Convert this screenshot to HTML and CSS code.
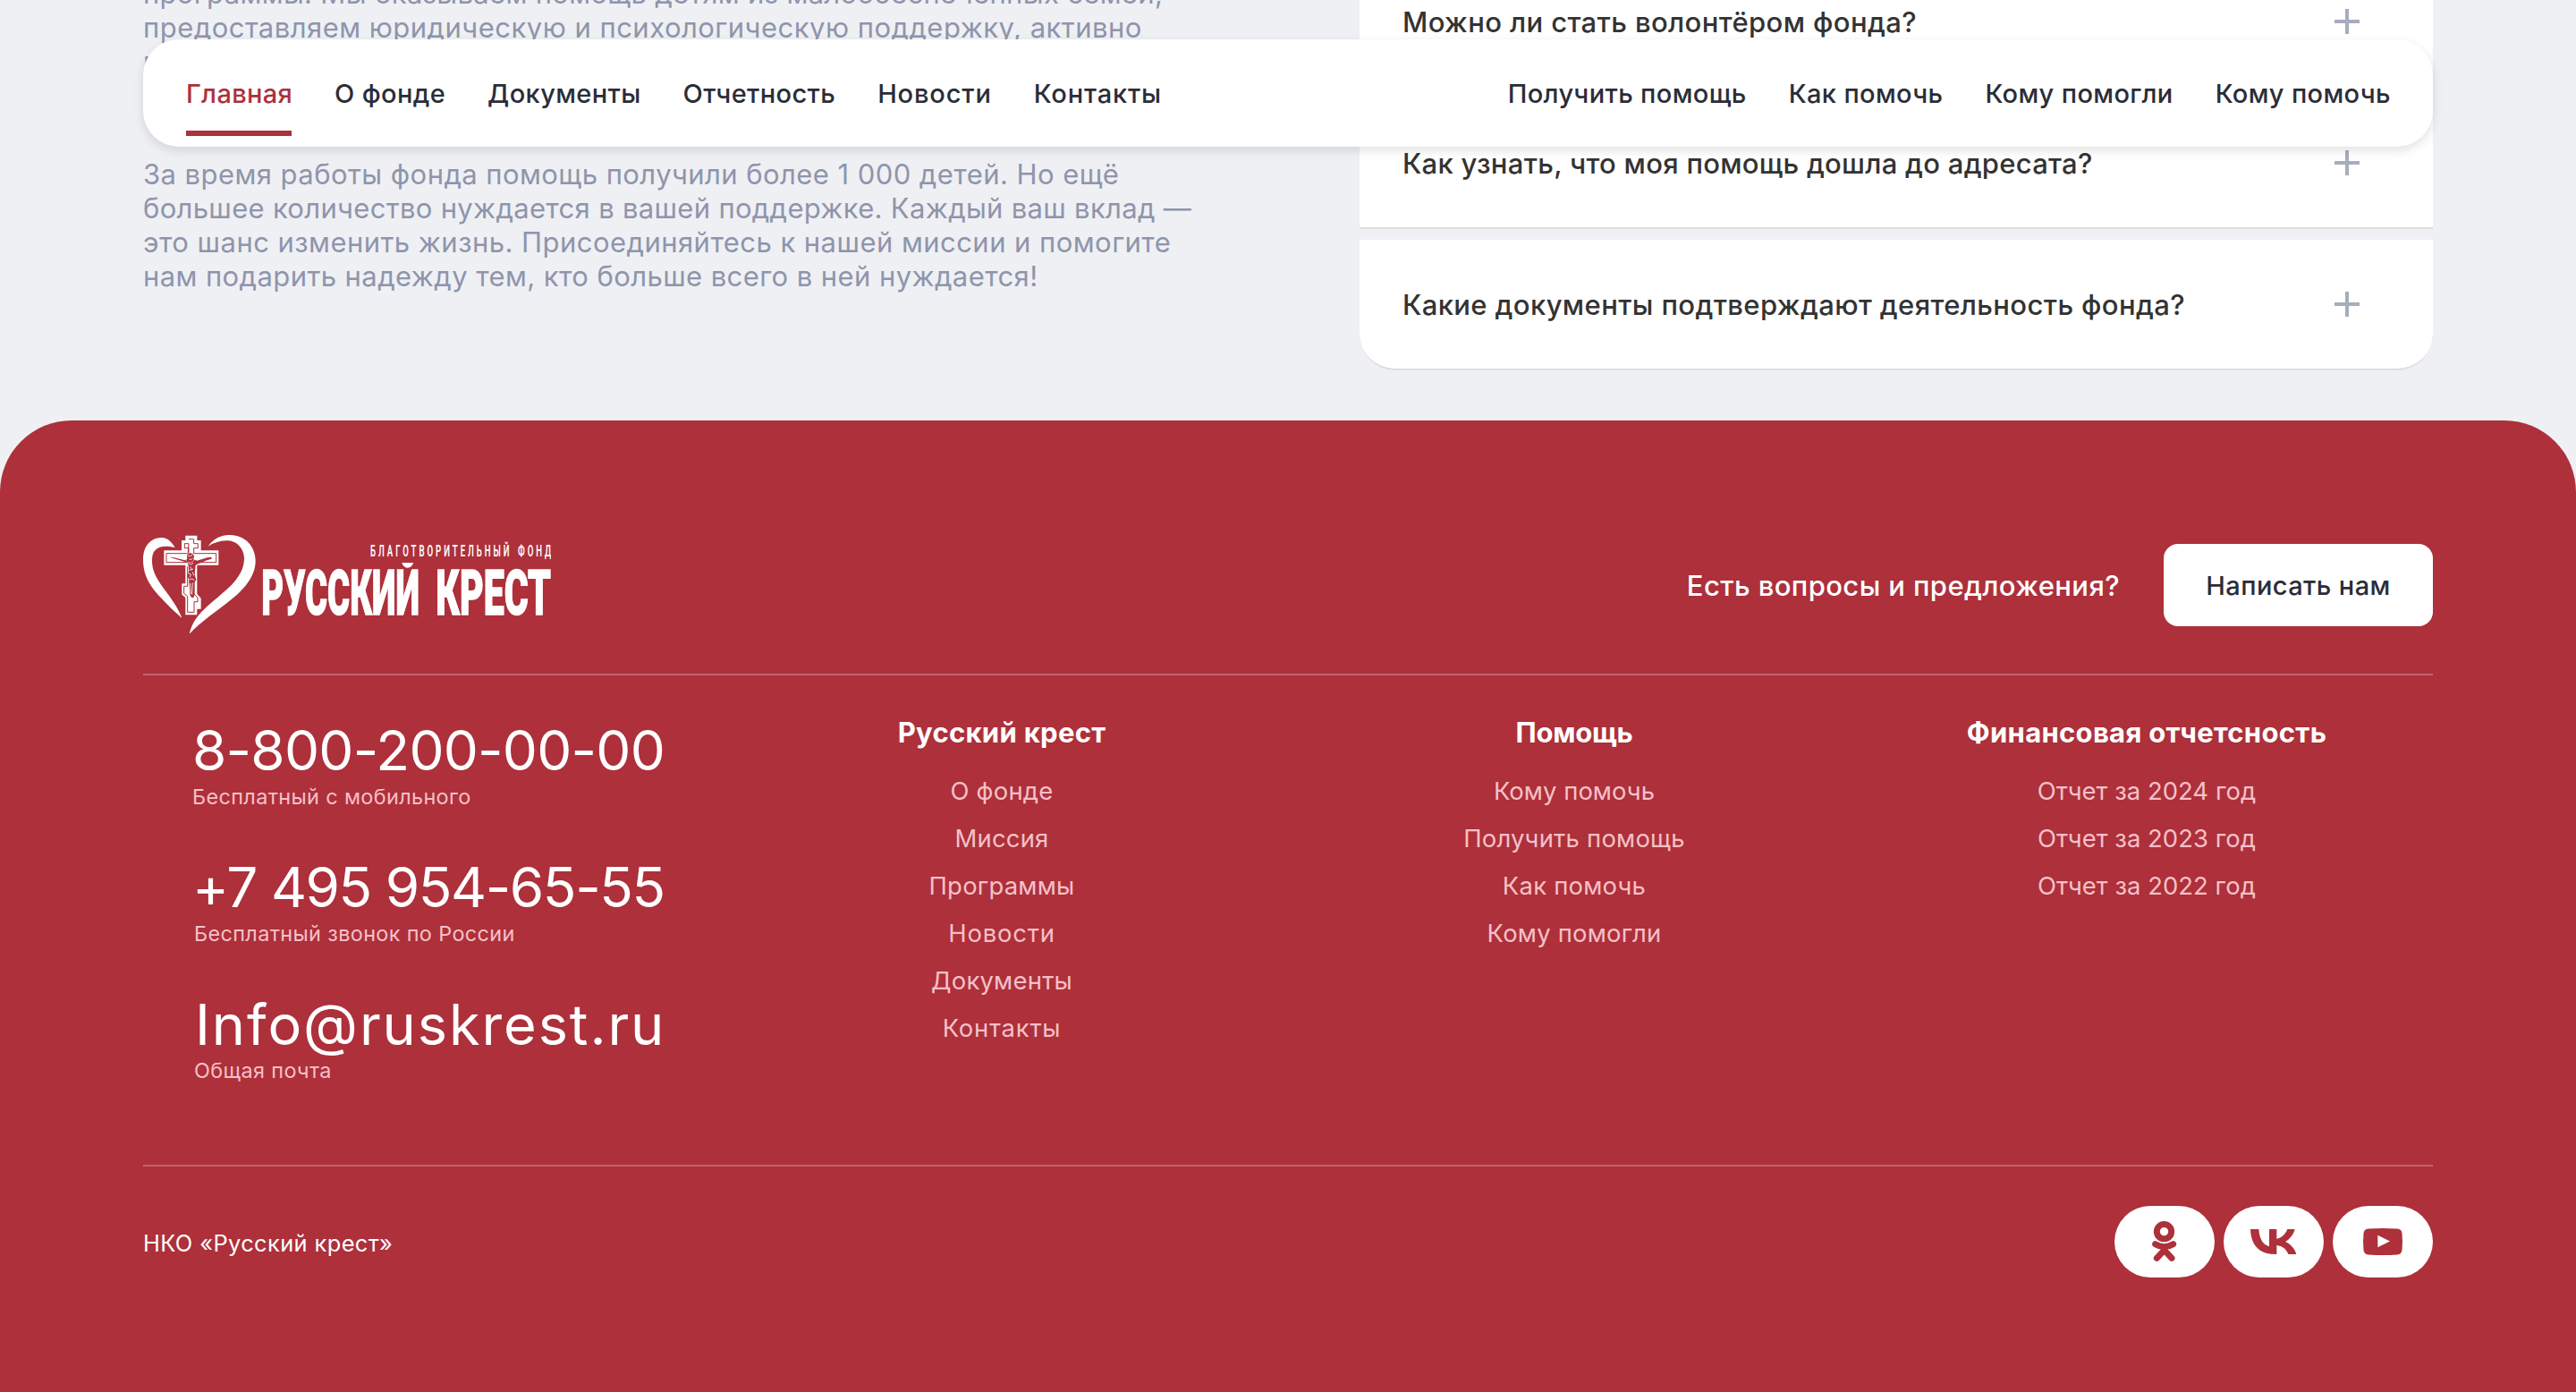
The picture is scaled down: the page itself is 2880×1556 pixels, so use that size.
FILE: index.html
```html
<!DOCTYPE html>
<html lang="ru">
<head>
<meta charset="utf-8">
<title>Русский крест</title>
<link rel="stylesheet" href="styles.css">
</head>
<body>
<nav class="nav">
  <ul class="nav__list">
    <li class="nav__item nav__item--active">Главная</li>
    <li class="nav__item">О фонде</li>
    <li class="nav__item">Документы</li>
    <li class="nav__item">Отчетность</li>
    <li class="nav__item nav__item--loose">Новости</li>
    <li class="nav__item nav__item--loose">Контакты</li>
  </ul>
  <ul class="nav__list">
    <li class="nav__item">Получить помощь</li>
    <li class="nav__item">Как помочь</li>
    <li class="nav__item">Кому помогли</li>
    <li class="nav__item">Кому помочь</li>
  </ul>
</nav>

<main class="main">
  <div class="about">
    <p class="about__text">
      <span class="line line--tight">программы. Мы оказываем помощь детям из малообеспеченных семей,</span>
      <span class="line line--wide">предоставляем юридическую и психологическую поддержку, активно</span>
      <span class="line">помогаем</span>
    </p>
    <p class="about__text">
      <span class="line">За время работы фонда помощь получили более 1 000 детей. Но ещё</span>
      <span class="line line--tighter">большее количество нуждается в вашей поддержке. Каждый ваш вклад —</span>
      <span class="line line--medium">это шанс изменить жизнь. Присоединяйтесь к нашей миссии и помогите</span>
      <span class="line line--normal">нам подарить надежду тем, кто больше всего в ней нуждается!</span>
    </p>
  </div>
  <div class="faq">
    <div class="faq__item"><span>Можно ли стать волонтёром фонда?</span><i class="plus"></i></div>
    <div class="faq__item"><span class="faq__q--tight">Как узнать, что моя помощь дошла до адресата?</span><i class="plus"></i></div>
    <div class="faq__item"><span>Какие документы подтверждают деятельность фонда?</span><i class="plus"></i></div>
  </div>
</main>

<footer class="footer">
  <div class="footer__top">
    <svg class="logo" viewBox="60 54 1368 330" role="img" aria-label="Русский крест">
      <clipPath id="name-area"><rect x="440" y="147" width="1000" height="190"/></clipPath>
      <g fill="#fff">
        <path d="M167 96C150 66 131 62 118 63C82 65 60 95 60 136C60 196 88 232 127 272C155 302 176 320 190 332C174 292 150 262 128 232C104 198 89 172 90 137C91 105 108 84 167 96Z"/>
        <path d="M278 92C298 64 325 54 352 54C404 55 437 94 437 141C437 190 402 232 366 262C318 302 260 338 215 386C223 350 243 324 262 306C304 266 344 238 370 206C390 180 399 158 399 131C397 96 372 72 340 73C315 74 295 81 278 92Z"/>
        <path d="M202 56h39v16h13v34h59v49h-72v97l13 14v36h-13v20h-39v-58l-12-10v-37h12v-62h-72v-49h59v-34h13z"/>
      </g>
      <g fill="none" stroke="#ad303a" stroke-width="3">
        <path d="M213 68h17v15h14v15h-14v18h75v30h-70M208 146h-70v-30h75v-18h-14v-15h14z"/>
        <path d="M209 160v66h-12v24l12 10v53h22v-35h12v-14l-12-12v-92"/>
      </g>
      <g fill="#ad303a">
        <path d="M150 128l14 2l36 9l10-4l-2-14l9-8l10 3l4 8l-2 12l12 4l34-10l14-2l1 6l-16 5l-30 12l-8 4l-3 32l5 18l-6 8v44l-4 8l-6-2l-5-8l-4-54l-4-8l5-22l-4-24l-40-12l-20-6z"/>
      </g>
      <g fill="none" stroke="#fff" stroke-width="2.5">
        <path d="M210 122q8 8 16-2M214 134q5 6 12-1M216 160l6 6l-4 6l10-4M212 182l8 4l-3 10M226 178l4 12M214 204l10-3l8 5M218 216l2 36M226 214l-2 40M213 148l7 5l8-5"/>
        <circle cx="217" cy="130" r="16" stroke-dasharray="4 3"/>
      </g>
      <g clip-path="url(#name-area)">
        <g class="logo__name" transform="translate(0 322) scale(1 1.4)">
          <text x="457" y="0" textLength="530" lengthAdjust="spacingAndGlyphs">РУССКИЙ</text>
          <text x="1042" y="0" textLength="386" lengthAdjust="spacingAndGlyphs">КРЕСТ</text>
        </g>
      </g>
      <g class="logo__tag" transform="translate(0 125) scale(.6 1.12)">
        <text x="1370" y="0" textLength="778" lengthAdjust="spacing">БЛАГОТВОРИТЕЛЬНЫЙ</text>
        <text x="2195" y="0" textLength="186" lengthAdjust="spacing">ФОНД</text>
      </g>
    </svg>
    <div class="ask">
      <span class="ask__text">Есть вопросы и предложения?</span>
      <button class="ask__button">Написать нам</button>
    </div>
  </div>

  <div class="footer__cols">
    <div class="contacts">
      <div class="contact contact--mobile"><div class="contact__value">8-800-200-00-00</div><div class="contact__label">Бесплатный с мобильного</div></div>
      <div class="contact contact--phone"><div class="contact__value">+7 495 954-65-55</div><div class="contact__label">Бесплатный звонок по России</div></div>
      <div class="contact contact--mail"><div class="contact__value">Info@ruskrest.ru</div><div class="contact__label">Общая почта</div></div>
    </div>
    <div class="col">
      <h3 class="col__title">Русский крест</h3>
      <a class="col__link">О фонде</a>
      <a class="col__link">Миссия</a>
      <a class="col__link">Программы</a>
      <a class="col__link col__link--loose">Новости</a>
      <a class="col__link">Документы</a>
      <a class="col__link col__link--loose">Контакты</a>
    </div>
    <div class="col">
      <h3 class="col__title col__title--tight">Помощь</h3>
      <a class="col__link col__link--tight">Кому помочь</a>
      <a class="col__link">Получить помощь</a>
      <a class="col__link">Как помочь</a>
      <a class="col__link">Кому помогли</a>
    </div>
    <div class="col">
      <h3 class="col__title">Финансовая отчетсность</h3>
      <a class="col__link col__link--tight">Отчет за 2024 год</a>
      <a class="col__link col__link--tight">Отчет за 2023 год</a>
      <a class="col__link col__link--tight">Отчет за 2022 год</a>
    </div>
  </div>

  <div class="footer__bottom">
    <span class="copy">НКО «Русский крест»</span>
    <div class="socials">
      <a class="social" aria-label="Одноклассники">
        <svg viewBox="0 0 336 240" fill="none" stroke="#ad303a" stroke-linecap="round" stroke-linejoin="round">
          <circle cx="166.5" cy="86" r="24.5" stroke-width="21"/>
          <path d="M137 128q30 18 60 0" stroke-width="21"/>
          <path d="M142 175l25-27l25 27" stroke-width="21" stroke-linejoin="miter"/>
        </svg>
      </a>
      <a class="social" aria-label="ВКонтакте">
        <svg viewBox="0 0 336 240" fill="#ad303a">
          <path d="M90 78H118C120 110 132 130 153 136V78H178V110C194 108 207 96 214 78H239C235 95 224 110 207 120C224 128 238 142 244 162H217C211 145 197 134 178 132V162H172C120 162 92 132 90 78Z"/>
        </svg>
      </a>
      <a class="social" aria-label="YouTube">
        <svg viewBox="0 0 336 240" fill="#ad303a" fill-rule="evenodd">
          <path d="M119 76.500Q168 73.500 217 76.500Q231 78 232.500 92Q235.500 120 232.500 148Q231 162 217 163.500Q168 166.500 119 163.500Q105 162 103.500 148Q100.500 120 103.500 92Q105 78 119 76.500ZM151 98V139L192 118.500Z"/>
        </svg>
      </a>
    </div>
  </div>
</footer>
</body>
</html>
```
FILE: styles.css
```css
* { box-sizing: border-box; }
body {
  margin: 0;
  height: 1556px;
  overflow: hidden;
  background: #eff0f4;
  font-family: Inter, "Open Sans", sans-serif;
  font-size: 31px;
  display: flex;
  flex-direction: column;
}
ul, p, h3 { margin: 0; padding: 0; list-style: none; }

.nav {
  position: absolute;
  z-index: 2;
  top: 44px;
  left: 160px;
  width: 2560px;
  height: 120px;
  padding: 0 47px 0 48px;
  border-radius: 40px;
  background: #fff;
  box-shadow: 0 4px 12px rgba(0, 0, 0, .12);
  display: flex;
  justify-content: space-between;
  font-size: 29px;
  font-weight: 500;
  color: #2b2d38;
}
.nav__list { display: flex; gap: 47px; }
.nav__item {
  height: 108px;
  line-height: 121px;
  letter-spacing: .37px;
  white-space: nowrap;
}
.nav__item--loose { letter-spacing: .85px; }
.nav__item--active {
  width: 118px;
  margin-right: 1px;
  letter-spacing: .3px;
  color: #ad303a;
  border-bottom: 6px solid #ad303a;
}

.main {
  height: 470px;
  flex: none;
  padding: 0 160px;
  display: grid;
  grid-template-columns: 1200px 1200px;
  column-gap: 160px;
  overflow: hidden;
}
.about {
  margin-top: -26px;
  display: flex;
  flex-direction: column;
  gap: 88px;
  color: #8e95ab;
  line-height: 38px;
}
.line { display: block; white-space: nowrap; letter-spacing: .441px; }
.line--tight { letter-spacing: .332px; }
.line--tighter { letter-spacing: .312px; }
.line--wide { letter-spacing: .477px; }
.line--medium { letter-spacing: .454px; }
.line--normal { letter-spacing: .41px; }

.faq {
  margin-top: -48px;
  display: flex;
  flex-direction: column;
  gap: 12px;
}
.faq__item {
  height: 146px;
  flex: none;
  padding: 0 82px 0 48px;
  background: #fff;
  border-bottom: 2px solid #dedede;
  display: flex;
  align-items: center;
  justify-content: space-between;
  font-weight: 500;
  letter-spacing: .385px;
  color: #333;
}
.faq__item:last-child { border-radius: 0 0 40px 40px; }
.faq__q--tight { letter-spacing: .275px; }
.plus {
  width: 28px;
  height: 28px;
  background:
    linear-gradient(#a6adbd, #a6adbd) center / 28px 4px no-repeat,
    linear-gradient(#a6adbd, #a6adbd) center / 4px 28px no-repeat;
}

.footer {
  flex: 1;
  padding: 128px 160px 0;
  border-radius: 80px 80px 0 0;
  background: #ad303a;
  color: #fff;
}
.footer__top {
  height: 157px;
  padding-bottom: 45px;
  border-bottom: 2px solid #c0636d;
  display: flex;
  align-items: center;
  justify-content: space-between;
}
.logo { width: 456px; height: 110px; }
.logo__name text { font: 900 150px Roboto, sans-serif; fill: #fff; stroke: #fff; stroke-width: 3px; }
.logo__tag text { font: 600 48px Roboto, sans-serif; fill: #fff; }
.ask { display: flex; align-items: center; gap: 49px; padding-top: 2px; }
.ask__text { font-weight: 500; letter-spacing: .4px; }
.ask__button {
  width: 301px;
  height: 92px;
  padding: 0;
  border: 0;
  border-radius: 16px;
  background: #fff;
  color: #2b2d38;
  font: 500 29px Inter, sans-serif;
  letter-spacing: .41px;
}

.footer__cols {
  height: 549px;
  padding-top: 45px;
  border-bottom: 2px solid #c0636d;
  display: grid;
  grid-template-columns: repeat(4, 640px);
}
.contacts { padding: 1px 0 0 55px; display: flex; flex-direction: column; gap: 49px; }
.contact__value { font-size: 62px; line-height: 76px; white-space: nowrap; }
.contact__label { font-size: 23.4px; line-height: 28px; letter-spacing: .37px; color: #f6c0c8; }
.contact--mobile .contact__value { letter-spacing: -.757px; }
.contact--phone { padding-left: 2px; }
.contact--phone .contact__value { letter-spacing: -1.422px; margin-left: -2px; }
.contact--mail { padding-left: 2px; }
.contact--mail .contact__value { font-size: 63px; letter-spacing: 1.93px; margin-left: 1px; }

.col { display: flex; flex-direction: column; align-items: center; }
.col__title {
  margin-bottom: 20px;
  font-size: 31px;
  font-weight: 700;
  line-height: 38px;
  letter-spacing: .3px;
}
.col__title--tight { letter-spacing: -.2px; }
.col__link { font-size: 27.4px; line-height: 53px; letter-spacing: .25px; color: #f6c0c8; }
.col__link--loose { letter-spacing: .8px; }
.col__link--tight { letter-spacing: .06px; }

.footer__bottom {
  padding-top: 44px;
  display: flex;
  align-items: center;
  justify-content: space-between;
}
.copy { padding-top: 2px; font-size: 25.4px; letter-spacing: .4px; }
.socials { display: flex; gap: 10px; }
.social { width: 112px; height: 80px; border-radius: 40px; background: #fff; }
.social svg { display: block; width: 112px; height: 80px; }
```
